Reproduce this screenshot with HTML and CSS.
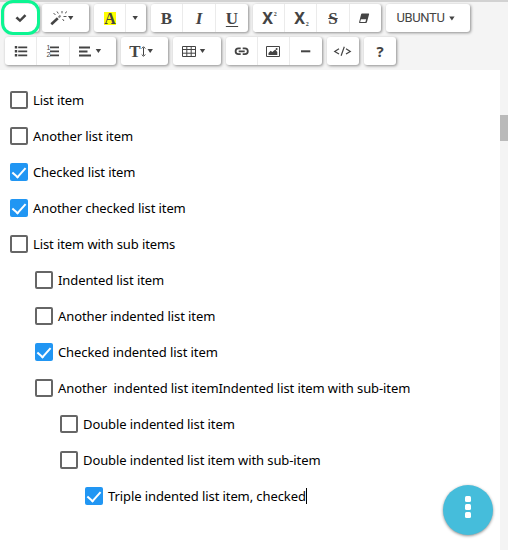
FILE: index.html
```html
<!DOCTYPE html>
<html lang="en">
<head>
<meta charset="utf-8">
<title>Editor</title>
<link rel="stylesheet" href="styles.css">
</head>
<body>
<header class="toolbar">
  <div class="row">
    <div class="group active"><button class="w34"><svg width="34" height="28"><path class="fill" d="M10.5 14.2l1.9-1.8 2.6 2.5 4.6-4.7 1.8 1.8-6.4 6.3z"/></svg></button></div>
    <div class="group after-check"><button class="w47"><svg width="47" height="28"><path class="wand" d="M9.3 20.3L15.8 14.2"/><path class="wand-tip" d="M16.6 13.4l1.9-1.8"/><path class="rays" d="M15 7.5l1.3 2M20 7v2.3M25 7.5l-2 1.8M21.5 12.5h3M20.5 15l1.5 2M11.5 9.5l2 1"/><path class="fill" d="M26 12h5.4l-2.7 4z"/></svg></button></div>
    <div class="group"><button class="w31"><span class="mark">A</span></button><button class="w21"><svg width="21" height="28"><path class="fill" d="M7.5 12h5.4l-2.7 4z"/></svg></button></div>
    <div class="group"><button class="w31 serif b">B</button><button class="w33 serif i">I</button><button class="w33 serif u">U</button></div>
    <div class="group"><button class="w31 script">X<sup>2</sup></button><button class="w32 script">X<sub>2</sub></button><button class="w33 serif s">S</button><button class="w32"><svg width="32" height="28"><path class="fill" fill-rule="evenodd" d="M13 9.5h6.6q.7 0 .5.7l-2.2 8q-.2.8-1 .8h-6.4q-.6 0-.4-.7l2-8q.2-.8.9-.8zM11.9 15.2l-.7 2.8h5.2l.8-2.8z"/></svg></button></div>
    <div class="group"><button class="w84 font">UBUNTU<svg width="6" height="5"><path class="fill" d="M.2.5h5.4l-2.7 4z"/></svg></button></div>
  </div>
  <div class="row">
    <div class="group">
      <button class="w31"><svg width="31" height="28"><path class="dots" d="M9.8 10.3h2.4M9.8 14.3h2.4M9.8 18.3h2.4"/><path class="lines" d="M13.2 10.3h9M13.2 14.3h9M13.2 18.3h9"/></svg></button>
      <button class="w33"><svg width="33" height="28"><path class="lines" d="M14 10.3h9M14 14.3h9M14 18.3h9"/><text class="num" x="10.5" y="13">1</text><text class="num" x="10.5" y="19.5">2</text></svg></button>
      <button class="w47"><svg width="47" height="28"><path class="lines" d="M10 10.5h11M10 14.5h8.5M10 18.5h12"/><path class="fill" d="M26.7 12h5.4l-2.7 4z"/></svg></button>
    </div>
    <div class="group"><button class="w47"><svg width="47" height="28"><text class="tee" x="8.2" y="19.5">T</text><path class="thin" d="M22.5 10.5v8M20.7 11.5l1.8-1.8 1.8 1.8M20.7 17.5l1.8 1.8 1.8-1.8"/><path class="fill" d="M26.5 12h5.4l-2.7 4z"/></svg></button></div>
    <div class="group"><button class="w48"><svg width="48" height="28"><path class="thin" d="M9.5 9.5h13v10h-13zM9.5 12.5h13M9.5 16.2h13M13.8 9.5v10M18.2 9.5v10"/><path class="fill" d="M26.8 12h5.4l-2.7 4z"/></svg></button></div>
    <div class="group">
      <button class="w31"><svg width="31" height="28"><path class="link" d="M14.7 11.4h-2.2a2.9 2.9 0 0 0 0 5.8h2.2M16.7 11.4h2.2a2.9 2.9 0 0 1 0 5.8h-2.2M12.7 14.3h6"/></svg></button>
      <button class="w32"><svg width="32" height="28"><path class="thin" d="M9.5 9.5h13v10h-13z"/><path class="fill" d="M11.5 18v-2l2.2-2.3 1.6 1.4 3-2.6 2 2.5v3z"/><circle class="fill" cx="19.6" cy="11.9" r="1"/></svg></button>
      <button class="w33"><svg width="33" height="28"><path class="rule" d="M12 14.3h9.3"/></svg></button>
    </div>
    <div class="group"><button class="w32"><svg width="32" height="28"><path class="code" d="M12 11.7l-4.3 2.7 4.3 2.7M19 11.7l4.3 2.7-4.3 2.7M17.3 9.8l-3.2 9"/></svg></button></div>
    <div class="group"><button class="w32 help">?</button></div>
  </div>
</header>
<main class="editor">
  <ul class="list">
    <li class="item"><i class="box"></i><span>List item</span></li>
    <li class="item"><i class="box"></i><span>Another list item</span></li>
    <li class="item"><i class="box on"></i><span>Checked list item</span></li>
    <li class="item"><i class="box on"></i><span>Another checked list item</span></li>
    <li class="item"><i class="box"></i><span>List item with sub items</span></li>
    <li><ul class="list">
      <li class="item"><i class="box"></i><span>Indented list item</span></li>
      <li class="item"><i class="box"></i><span>Another indented list item</span></li>
      <li class="item"><i class="box on"></i><span>Checked indented list item</span></li>
      <li class="item"><i class="box"></i><span>Another&nbsp; indented list itemIndented list item with sub-item</span></li>
      <li><ul class="list">
        <li class="item"><i class="box"></i><span>Double indented list item</span></li>
        <li class="item"><i class="box"></i><span>Double indented list item with sub-item</span></li>
        <li><ul class="list">
          <li class="item"><i class="box on"></i><span>Triple indented list item, checked</span><b class="caret"></b></li>
        </ul></li>
      </ul></li>
    </ul></li>
  </ul>
</main>
<div class="thumb"></div>
<button class="fab"><i></i><i></i><i></i></button>
</body>
</html>
```
FILE: styles.css
```css
* { box-sizing: border-box; }
body {
  margin: 0;
  width: 508px;
  height: 550px;
  overflow: hidden;
  position: relative;
  background: #f4f4f4;
  font-family: "Noto Sans", sans-serif;
}
.toolbar {
  height: 70px;
  padding: 2px 5px 0;
  border-top: 2px solid #d2d2d2;
}
.row { display: flex; gap: 5px; height: 28px; margin-bottom: 5px; }
.group {
  display: flex;
  flex: none;
  height: 28px;
  background: #fff;
  border-radius: 3px;
  box-shadow: 1px 1px 3px rgba(0, 0, 0, .42);
}
.active { position: relative; }
.active::after {
  content: "";
  position: absolute;
  inset: -4px -1px -3px -4px;
  border: 3px solid #0cf592;
  border-radius: 12px;
}
.after-check { margin-left: -2px; }
button {
  border: 0;
  padding: 0;
  background: none;
  color: #444;
  display: flex;
  align-items: center;
  justify-content: center;
  height: 28px;
}
button + button { border-left: 1px solid #ebebeb; }
button + button svg { margin-left: -1px; }
svg { display: block; flex: none; }
.w21 { width: 21px; }
.w31 { width: 31px; }
.w32 { width: 32px; }
.w33 { width: 33px; }
.w34 { width: 34px; }
.w47 { width: 47px; }
.w48 { width: 48px; }
.w84 { width: 84px; }
.fill { fill: #444; }
.wand, .wand-tip, .rays, .dots, .lines, .thin, .link, .rule, .code { fill: none; stroke: #444; }
.wand { stroke-width: 2.6; }
.wand-tip { stroke-width: 2; stroke: #888; }
.rays { stroke-width: .9; }
.dots { stroke-width: 2.4; }
.lines { stroke-width: 1.8; }
.thin { stroke-width: 1; }
.link { stroke-width: 1.8; }
.rule { stroke-width: 2; }
.code { stroke-width: 1.2; }
.num { font: 7px "Liberation Sans", sans-serif; fill: #444; }
.tee { font: bold 17px "Liberation Serif", serif; fill: #444; }
.mark {
  width: 12px;
  height: 13px;
  margin: 1px 0 0 1px;
  background: #ff0;
  font: bold 16px/14px "Liberation Serif", serif;
  text-align: center;
}
.serif { font: 17px/28px "Liberation Serif", serif; padding-top: 2px; }
.b { font-weight: bold; }
.i { font-style: italic; font-weight: bold; }
.u { text-decoration: underline; text-underline-offset: 2px; font-weight: bold; }
.s { text-decoration: line-through; font-weight: bold; }
.script { font: bold 16px/28px "Noto Sans", sans-serif; padding-left: 2px; }
.script sup, .script sub { font: bold 6px/8px "Liberation Serif", serif; }
.script sup { margin: -8px 0 0 1px; }
.script sub { margin: 12px 0 0 1px; }
.font { font: 13px/28px Roboto, sans-serif; letter-spacing: -.4px; gap: 5px; padding-right: 4px; }
.help { font: bold 15px/28px "Noto Sans", sans-serif; }
.editor {
  width: 500px;
  height: 480px;
  padding: 12px 0 0 10px;
  background: #fff;
}
.list { list-style: none; margin: 0; padding: 0; }
.list .list { padding-left: 25px; }
.item {
  display: flex;
  align-items: center;
  gap: 5px;
  height: 36px;
  font-size: 13px;
  line-height: 18px;
  letter-spacing: -.095px;
  color: #000;
  white-space: nowrap;
}
.box {
  width: 18px;
  height: 18px;
  flex: none;
  border: 2px solid #666;
  border-radius: 2px;
}
.on {
  border: 0;
  background: #2196f3;
  display: flex;
  justify-content: center;
}
.on::after {
  content: "";
  width: 6px;
  height: 11px;
  margin-top: 2px;
  border: solid #fff;
  border-width: 0 2px 2px 0;
  transform: translateY(-.5px) rotate(42deg);
}
.caret { width: 1px; height: 16px; margin-left: -5px; background: #000; }
.thumb {
  position: absolute;
  left: 500px;
  top: 115px;
  width: 8px;
  height: 26px;
  background: #bababa;
}
.fab {
  position: absolute;
  left: 443px;
  top: 485px;
  width: 50px;
  height: 50px;
  border-radius: 50%;
  background: #45bddb;
  box-shadow: 0 1px 3px rgba(0, 0, 0, .45);
  flex-direction: column;
  gap: 2px;
  padding-bottom: 6px;
}
.fab i { width: 6px; height: 6px; border-radius: 1.5px; background: #fff; }
```
